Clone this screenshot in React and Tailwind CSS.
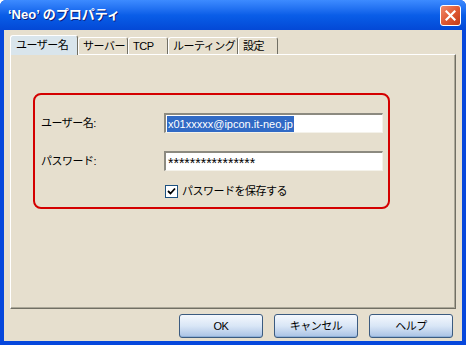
const font = { fontFamily: '"Liberation Sans","Noto Sans CJK JP",sans-serif' }

const tabs = [
  { label: 'ユーザー名', w: 'w-[68px]', active: true },
  { label: 'サーバー', w: 'w-[50px]' },
  { label: 'TCP', w: 'w-[40px]' },
  { label: 'ルーティング', w: 'w-[70px]' },
  { label: '設定', w: 'w-[40px]' },
]

const XpButton = ({ children }) => (
  <button className="h-[24px] w-[84px] rounded-[3px] border border-[#3b5b80] bg-gradient-to-b from-[#f4f8fd] via-[#d9e6f6] to-[#a9c2e4] text-[11px] tracking-[-0.5px] text-black shadow-[inset_0_-1px_0_#8fb0d8]">
    {children}
  </button>
)

const App = () => {
  return (
    <div className="flex h-[345px] w-[466px] flex-col overflow-hidden rounded-t-[6px] bg-[#0647dc]" style={font}>
      {/* title bar */}
      <div className="relative flex h-[30px] items-center bg-gradient-to-b from-[#3d8bff] via-[#0a5ee8] to-[#0448d6] pl-[8px]">
        <span className="text-[13px] font-bold text-white [text-shadow:1px_1px_0_#0a1e7a]">‘Neo’ のプロパティ</span>
        <div className="absolute right-[5px] top-[5px] flex h-[21px] w-[21px] items-center justify-center rounded-[3px] border border-white bg-gradient-to-br from-[#f08a6a] via-[#e05a34] to-[#c23b17]">
          <svg width="11" height="11" viewBox="0 0 11 11">
            <path d="M1.5 1.5 L9.5 9.5 M9.5 1.5 L1.5 9.5" stroke="white" strokeWidth="2.2" strokeLinecap="square" />
          </svg>
        </div>
      </div>

      {/* body */}
      <div className="mx-[4px] mb-[4px] flex flex-1 flex-col bg-[#e6dfce] pl-[6px] pr-[7px] pt-[5px]">
        <div className="flex h-[19px] items-end">
          {tabs.map((t) => (
            <div
              key={t.label}
              className={
                (t.active
                  ? 'z-10 -mb-px h-[20px] bg-[#d9e5ec] pl-[5px]'
                  : 'h-[17px] pl-[4px]') +
                ` ${t.w} flex items-center whitespace-nowrap rounded-t-[3px] border-l border-t border-r border-l-white border-t-white border-r-[#716f64] text-[11px] tracking-[-0.5px] text-black`
              }
            >
              {t.label}
            </div>
          ))}
        </div>

        {/* tab panel */}
        <div className="h-[255px] w-[446px] border border-l-white border-t-white border-r-[#716f64] border-b-[#716f64] shadow-[inset_-1px_-1px_0_#aca899] pl-[22px] pt-[38px]">
          <div className="h-[116px] w-[357px] rounded-[8px] border-2 border-[#d40000] pl-[6px] pt-[18px]">
            <div className="flex h-[20px] items-center">
              <span className="w-[123px] text-[11px] tracking-[-0.5px] text-black">ユーザー名:</span>
              <div className="flex h-[20px] w-[219px] items-center border-l-2 border-t-2 border-r border-b border-l-[#8c8a80] border-t-[#8c8a80] border-r-[#f4f2ea] border-b-[#f4f2ea] bg-white pl-[1px]">
                <span className="bg-[#316ac5] px-[1px] text-[11px] leading-[16px] text-white">x01xxxxx@ipcon.it-neo.jp</span>
              </div>
            </div>
            <div className="mt-[18px] flex h-[20px] items-center">
              <span className="w-[123px] text-[11px] tracking-[-0.5px] text-black">パスワード:</span>
              <div className="flex h-[20px] w-[219px] items-center border-l-2 border-t-2 border-r border-b border-l-[#8c8a80] border-t-[#8c8a80] border-r-[#f4f2ea] border-b-[#f4f2ea] bg-white pl-[2px]">
                <span className="pt-[3px] text-[14px] leading-[16px] text-black">****************</span>
              </div>
            </div>
            <div className="ml-[124px] mt-[12px] flex items-center gap-[4px]">
              <div className="flex h-[13px] w-[13px] items-center justify-center border border-[#1c5180] bg-white">
                <svg width="9" height="9" viewBox="0 0 9 9">
                  <path d="M1 4 L3.5 6.5 L8 1.5" stroke="black" strokeWidth="1.8" fill="none" />
                </svg>
              </div>
              <span className="text-[11px] tracking-[-0.5px] text-black">パスワードを保存する</span>
            </div>
          </div>
        </div>

        {/* buttons */}
        <div className="mt-[5px] flex justify-end gap-[11px] pr-[2px]">
          <XpButton>OK</XpButton>
          <XpButton>キャンセル</XpButton>
          <XpButton>ヘルプ</XpButton>
        </div>
      </div>
    </div>
  )
}

export default App
